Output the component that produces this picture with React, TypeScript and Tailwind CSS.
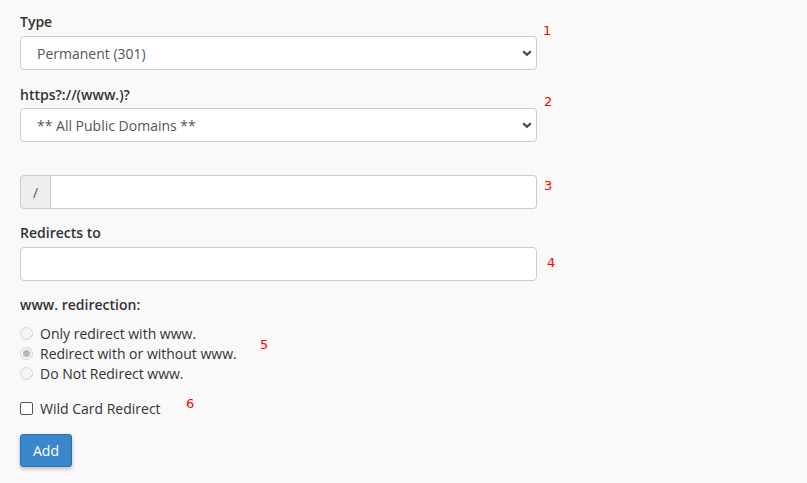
import { useState } from 'react'

function Chevron() {
  return (
    <svg width="10" height="7" viewBox="0 0 10 7" className="pointer-events-none absolute right-[5px] top-[14px]">
      <path d="M1.2 1.2 L5 4.8 L8.8 1.2" fill="none" stroke="#444" strokeWidth="2.2" />
    </svg>
  )
}

function Note({ n, className }: { n: string; className: string }) {
  return (
    <span className={`absolute text-[13px] leading-none text-[#ff0000] font-['DejaVu_Sans',sans-serif] ${className}`}>{n}</span>
  )
}

function Radio({ label, checked }: { label: string; checked?: boolean }) {
  return (
    <label className="flex h-5 items-center">
      <span className="flex h-[13px] w-[13px] items-center justify-center rounded-full border border-[#d6d6d6] bg-[#f4f4f4]">
        {checked && <span className="h-[7px] w-[7px] rounded-full bg-[#b8b8b8]" />}
      </span>
      <span className="ml-[7px] text-[#333]">{label}</span>
    </label>
  )
}

export default function App() {
  const [wild, setWild] = useState(false)
  const selectCls =
    "h-[34px] w-full appearance-none rounded-[4px] border border-[#cccccc] bg-white pl-4 text-[14px] text-[#555] outline-none"
  const inputCls = "h-[34px] w-full rounded-[4px] border border-[#cccccc] bg-white px-3 outline-none"

  return (
    <div className="min-h-screen bg-[#f9f9f9] pl-5 pt-[12px] text-[14px] text-[#333] font-['Open_Sans',sans-serif]">
      <div className="relative w-[517px]">
        <div className="mb-[4px] font-semibold leading-5">Type</div>
        <div className="relative">
          <select className={selectCls} defaultValue="301">
            <option value="301">Permanent (301)</option>
            <option value="302">Temporary (302)</option>
          </select>
          <Chevron />
        </div>
        <Note n="1" className="left-[523px] top-[12px]" />
      </div>

      <div className="relative mt-[15px] w-[517px]">
        <div className="mb-[3px] font-semibold leading-5">https?://(www.)?</div>
        <div className="relative">
          <select className={selectCls} defaultValue="all">
            <option value="all">** All Public Domains **</option>
          </select>
          <Chevron />
        </div>
        <Note n="2" className="left-[524px] top-[10px]" />
      </div>

      <div className="relative mt-[33px] flex w-[517px]">
        <span className="flex h-[34px] w-[31px] items-center justify-center rounded-l-[4px] border border-[#cccccc] bg-[#eeeeee] text-[#555]">/</span>
        <input className="h-[34px] flex-1 rounded-r-[4px] border border-l-0 border-[#cccccc] bg-white px-3 outline-none" />
        <Note n="3" className="left-[524px] top-[4px]" />
      </div>

      <div className="relative mt-[14px] w-[517px]">
        <div className="mb-[4px] font-semibold leading-5">Redirects to</div>
        <input className={inputCls} />
        <Note n="4" className="left-[527px] top-[33px]" />
      </div>

      <div className="relative mt-[14px] w-[517px]">
        <div className="font-semibold leading-5">www. redirection:</div>
        <div className="mt-2">
          <Radio label="Only redirect with www." />
          <Radio label="Redirect with or without www." checked />
          <Radio label="Do Not Redirect www." />
        </div>
        <Note n="5" className="left-[240px] top-[43px]" />
      </div>

      <div className="relative mt-[15px] w-[517px]">
        <label className="flex h-5 items-center">
          <input
            type="checkbox"
            checked={wild}
            onChange={() => setWild(!wild)}
            className="h-[13px] w-[13px] appearance-none rounded-[2px] border border-[#555] bg-white"
          />
          <span className="ml-[7px]">Wild Card Redirect</span>
        </label>
        <Note n="6" className="left-[166px] top-[-1px]" />
      </div>

      <button className="mt-4 h-[33px] w-[52px] rounded-[3px] border border-[#2c6fa9] bg-[#3a87cc] text-white shadow-[0_2px_4px_rgba(0,0,0,0.25)]">
        Add
      </button>
    </div>
  )
}
